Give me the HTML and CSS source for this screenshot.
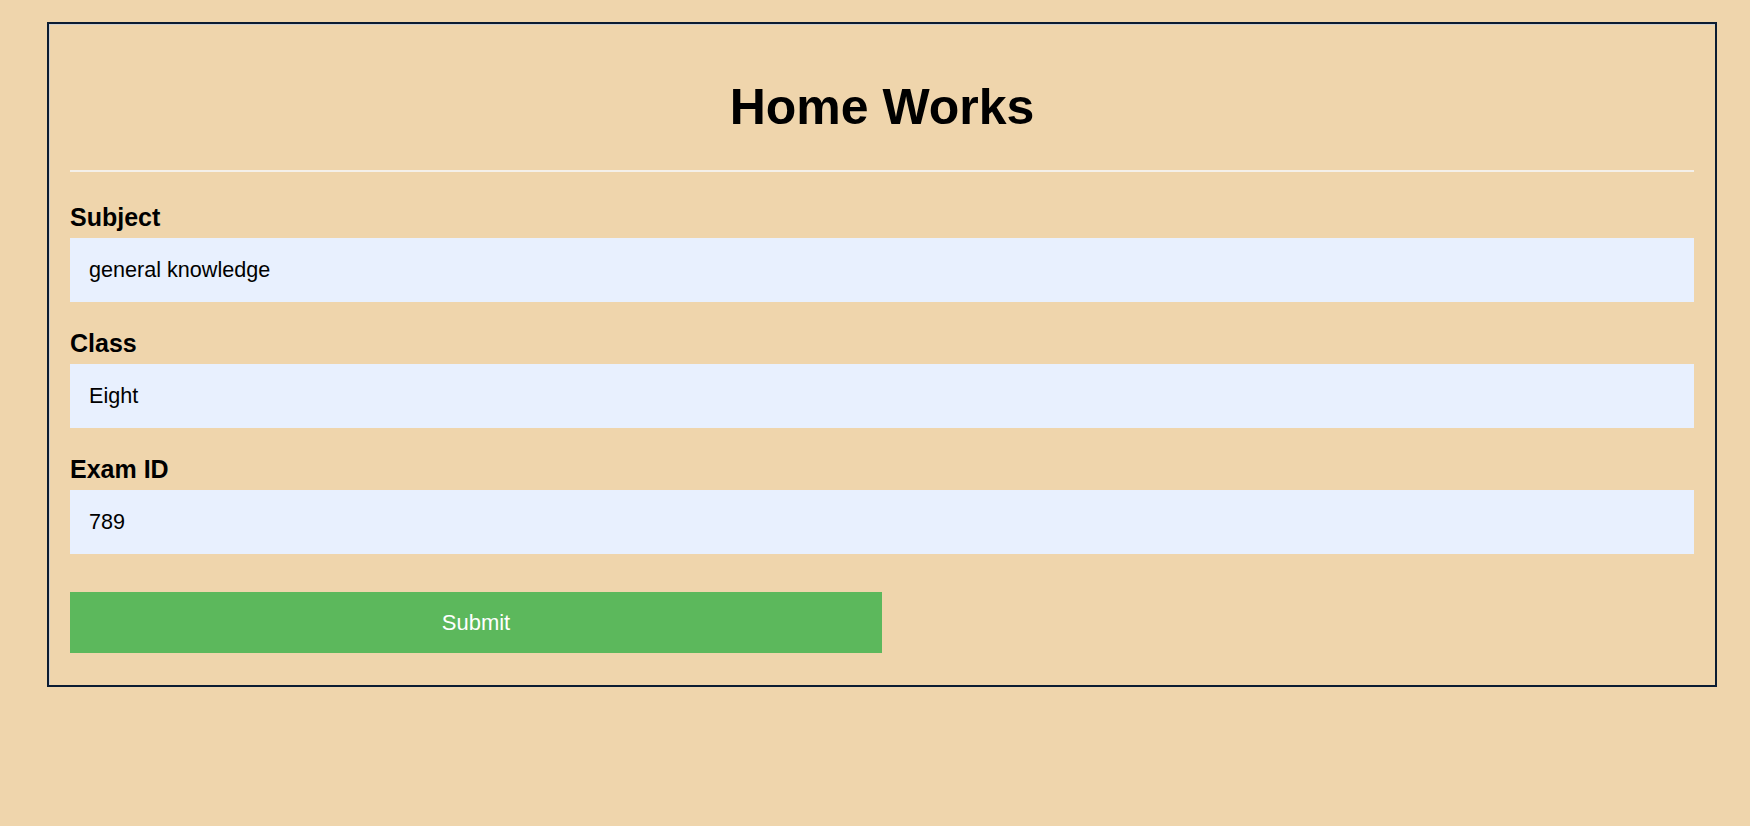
FILE: index.html
```html
<!DOCTYPE html>
<html lang="en">
<head>
<meta charset="utf-8">
<title>Home Works</title>
<link rel="stylesheet" href="styles.css">
</head>
<body>
<div class="box">
  <h1 class="title">Home Works</h1>
  <hr class="rule">
  <form class="form">
    <div class="field">
      <label class="label" for="subject">Subject</label>
      <input class="input" id="subject" type="text" value="general knowledge">
    </div>
    <div class="field">
      <label class="label" for="klass">Class</label>
      <input class="input" id="klass" type="text" value="Eight">
    </div>
    <div class="field">
      <label class="label" for="exam">Exam ID</label>
      <input class="input" id="exam" type="text" value="789" autofocus>
    </div>
    <button class="submit" type="button">Submit</button>
  </form>
</div>
</body>
</html>
```

FILE: styles.css
```css
html, body {
  margin: 0;
  padding: 0;
}
body {
  background: #efd5ac;
  font-family: "Liberation Sans", Arial, sans-serif;
  color: #000;
}
.box {
  margin: 22px 33px 0 47px;
  border: 2px solid #0b1c32;
  box-shadow: inset 1px 1px 0 #cfcfcf;
  padding: 21px 21px 22px 21px;
}
.title {
  margin: 33px 0 34px;
  font-size: 50px;
  line-height: 58px;
  font-weight: bold;
  text-align: center;
}
.rule {
  margin: 0;
  border: 0;
  height: 2px;
  background: #f4f0ea;
}
.form {
  display: flex;
  flex-direction: column;
  align-items: flex-start;
  margin: 0;
}
.field {
  display: flex;
  flex-direction: column;
  align-self: stretch;
  margin-top: 27px;
}
.field:first-child {
  margin-top: 31px;
}
.label {
  font-size: 25px;
  line-height: 28px;
  font-weight: bold;
  margin-bottom: 7px;
}
.input {
  box-sizing: border-box;
  height: 64px;
  margin: 0;
  border: 0;
  outline: none;
  padding: 0 19px;
  background: #e8f0fe;
  font-family: "Liberation Sans", Arial, sans-serif;
  font-size: 21.6px;
  color: #000;
  caret-color: #000;
}
.submit {
  box-sizing: border-box;
  width: 50%;
  height: 61px;
  margin: 38px 0 10px;
  border: 0;
  padding: 0;
  background: #5cb85c;
  color: #fff;
  font-family: "Liberation Sans", Arial, sans-serif;
  font-size: 22px;
  text-align: center;
  cursor: pointer;
}
```
